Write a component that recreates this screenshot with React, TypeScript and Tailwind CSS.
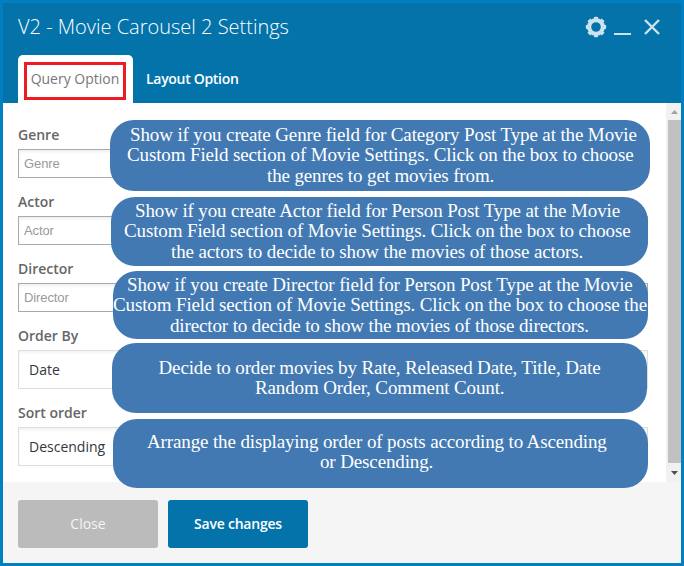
import React from "react";

const openSans = "font-['Open_Sans','Noto_Sans',sans-serif]";

function TextField({ label }: { label: string }) {
  return (
    <label className="block h-[67px]">
      <span className="block h-[23px] text-[14px] leading-[18px] font-semibold text-[#666]">{label}</span>
      <input
        placeholder={label}
        className="block h-[29px] w-[630px] border border-[#aaa] bg-white px-[5px] font-['Liberation_Sans',sans-serif] text-[13px] tracking-[-0.1px] shadow-[inset_0_2px_3px_rgba(0,0,0,0.07)] outline-none placeholder:text-[#999]"
      />
    </label>
  );
}

function SelectField({ label, value }: { label: string; value: string }) {
  return (
    <div className="h-[77px]">
      <div className="h-[23px] text-[14px] leading-[18px] font-semibold text-[#666]">{label}</div>
      <div className="flex h-[39px] w-[630px] items-center border border-[#ddd] px-[10px] text-[14px] text-[#32373c] shadow-[inset_0_2px_3px_rgba(0,0,0,0.05)]">
        {value}
      </div>
    </div>
  );
}

function Callout({ box, lines }: { box: string; lines: [string, string][] }) {
  return (
    <div className={`absolute rounded-[24px] bg-[#4279b2] font-['Liberation_Serif',serif] text-[19px] leading-[20.5px] tracking-[-0.13px] text-white ${box}`}>
      {lines.map(([text, place]) => (
        <div key={text} className={`w-max whitespace-nowrap ${place}`}>{text}</div>
      ))}
    </div>
  );
}

export default function App() {
  return (
    <div className={`relative flex h-[566px] w-[684px] flex-col overflow-hidden border-[3px] border-[#0080c2] bg-white ${openSans}`}>
      <header className="flex h-[100px] shrink-0 flex-col justify-between bg-[#0473aa]">
        <div className="flex h-[47px] items-center justify-between pr-[20px] pl-[15px]">
          <h1 className="text-[20px] font-light text-white">V2 - Movie Carousel 2 Settings</h1>
          <div className="flex items-center text-[#cce3ee]">
            <svg width="22" height="22" viewBox="0 0 22 22" fill="none" stroke="currentColor">
              <circle cx="11" cy="11" r="6.9" strokeWidth="4.2" />
              <circle cx="11" cy="11" r="9.1" strokeWidth="2.2" pathLength="80" strokeDasharray="5.4 4.6" strokeDashoffset="2.7" />
            </svg>
            <svg className="ml-[7px]" width="17" height="22"><path d="M0 18h17" stroke="currentColor" strokeWidth="2" /></svg>
            <svg className="ml-[12px]" width="18" height="22" viewBox="0 0 18 22"><path d="m2 4 14 14M16 4 2 18" stroke="currentColor" strokeWidth="2.4" /></svg>
          </div>
        </div>
        <nav className="flex h-[48px] pl-[15px] text-[14px]">
          <div className="w-[115px] rounded-t-[5px] bg-white pt-[7px] pl-[6px]">
            <div className="flex h-[38px] w-[102px] items-center justify-center border-[3px] border-[#ed1c24] pb-[6px] whitespace-nowrap text-[#777]">Query Option</div>
          </div>
          <div className="pt-[13px] pl-[13px] leading-[21px] font-semibold tracking-[-0.3px] text-white">Layout Option</div>
        </nav>
      </header>

      <main className="flex h-[379px] shrink-0 justify-between">
        <div className="pt-[23px] pl-[15px]">
          <TextField label="Genre" />
          <TextField label="Actor" />
          <TextField label="Director" />
          <SelectField label="Order By" value="Date" />
          <SelectField label="Sort order" value="Descending" />
        </div>
        <div className="flex w-[15px] flex-col items-end bg-[#f1f1f1]">
          <svg width="15" height="17"><path d="M5 11h7L8.500 7z" fill="#a3a3a3" /></svg>
          <div className="h-[343px] w-[13px] bg-[#c1c1c1]" />
          <svg width="15" height="19"><path d="M5 8h7l-3.500 4z" fill="#505050" /></svg>
        </div>
      </main>

      <footer className="flex h-[81px] shrink-0 gap-[10px] bg-[#f5f5f5] pt-[18px] pl-[15px] text-[14px] text-white">
        <button className="h-[48px] w-[140px] rounded-[3px] bg-[#bbb] pb-[2px] font-medium text-[#f5f5f5]">Close</button>
        <button className="h-[48px] w-[140px] rounded-[3px] bg-[#0473aa] pb-[2px] font-semibold tracking-[-0.22px]">Save changes</button>
      </footer>

      <Callout
        box="top-[117px] left-[107px] h-[71px] w-[540px] pt-[4.600px]"
        lines={[
          ["Show if you create Genre field for Category Post Type at the Movie", "ml-[20px]"],
          ["Custom Field section of Movie Settings. Click on the box to choose", "ml-[17px]"],
          ["the genres to get movies from.", "ml-[157px]"],
        ]}
      />
      <Callout
        box="top-[194px] left-[108px] h-[69px] w-[537px] pt-[3.600px]"
        lines={[
          ["Show if you create Actor field for Person Post Type at the Movie", "ml-[24px]"],
          ["Custom Field section of Movie Settings. Click on the box to choose", "ml-[13px]"],
          ["the actors to decide to show the movies of those actors.", "ml-[60px]"],
        ]}
      />
      <Callout
        box="top-[268px] left-[110px] h-[68px] w-[535px] pt-[3.600px]"
        lines={[
          ["Show if you create Director field for Person Post Type at the Movie", "ml-[14px]"],
          ["Custom Field section of Movie Settings. Click on the box to choose the", ""],
          ["director to decide to show the movies of those directors.", "ml-[57px]"],
        ]}
      />
      <Callout
        box="top-[340px] left-[109px] h-[70px] w-[535px] pt-[14.600px]"
        lines={[
          ["Decide to order movies by Rate, Released Date, Title, Date", "ml-[46.500px]"],
          ["Random Order, Comment Count.", "ml-[143px]"],
        ]}
      />
      <Callout
        box="top-[416px] left-[110px] h-[69px] w-[535px] pt-[12.600px]"
        lines={[
          ["Arrange the displaying order of posts according to Ascending", "ml-[34px]"],
          ["or Descending.", "ml-[207px]"],
        ]}
      />
    </div>
  );
}
